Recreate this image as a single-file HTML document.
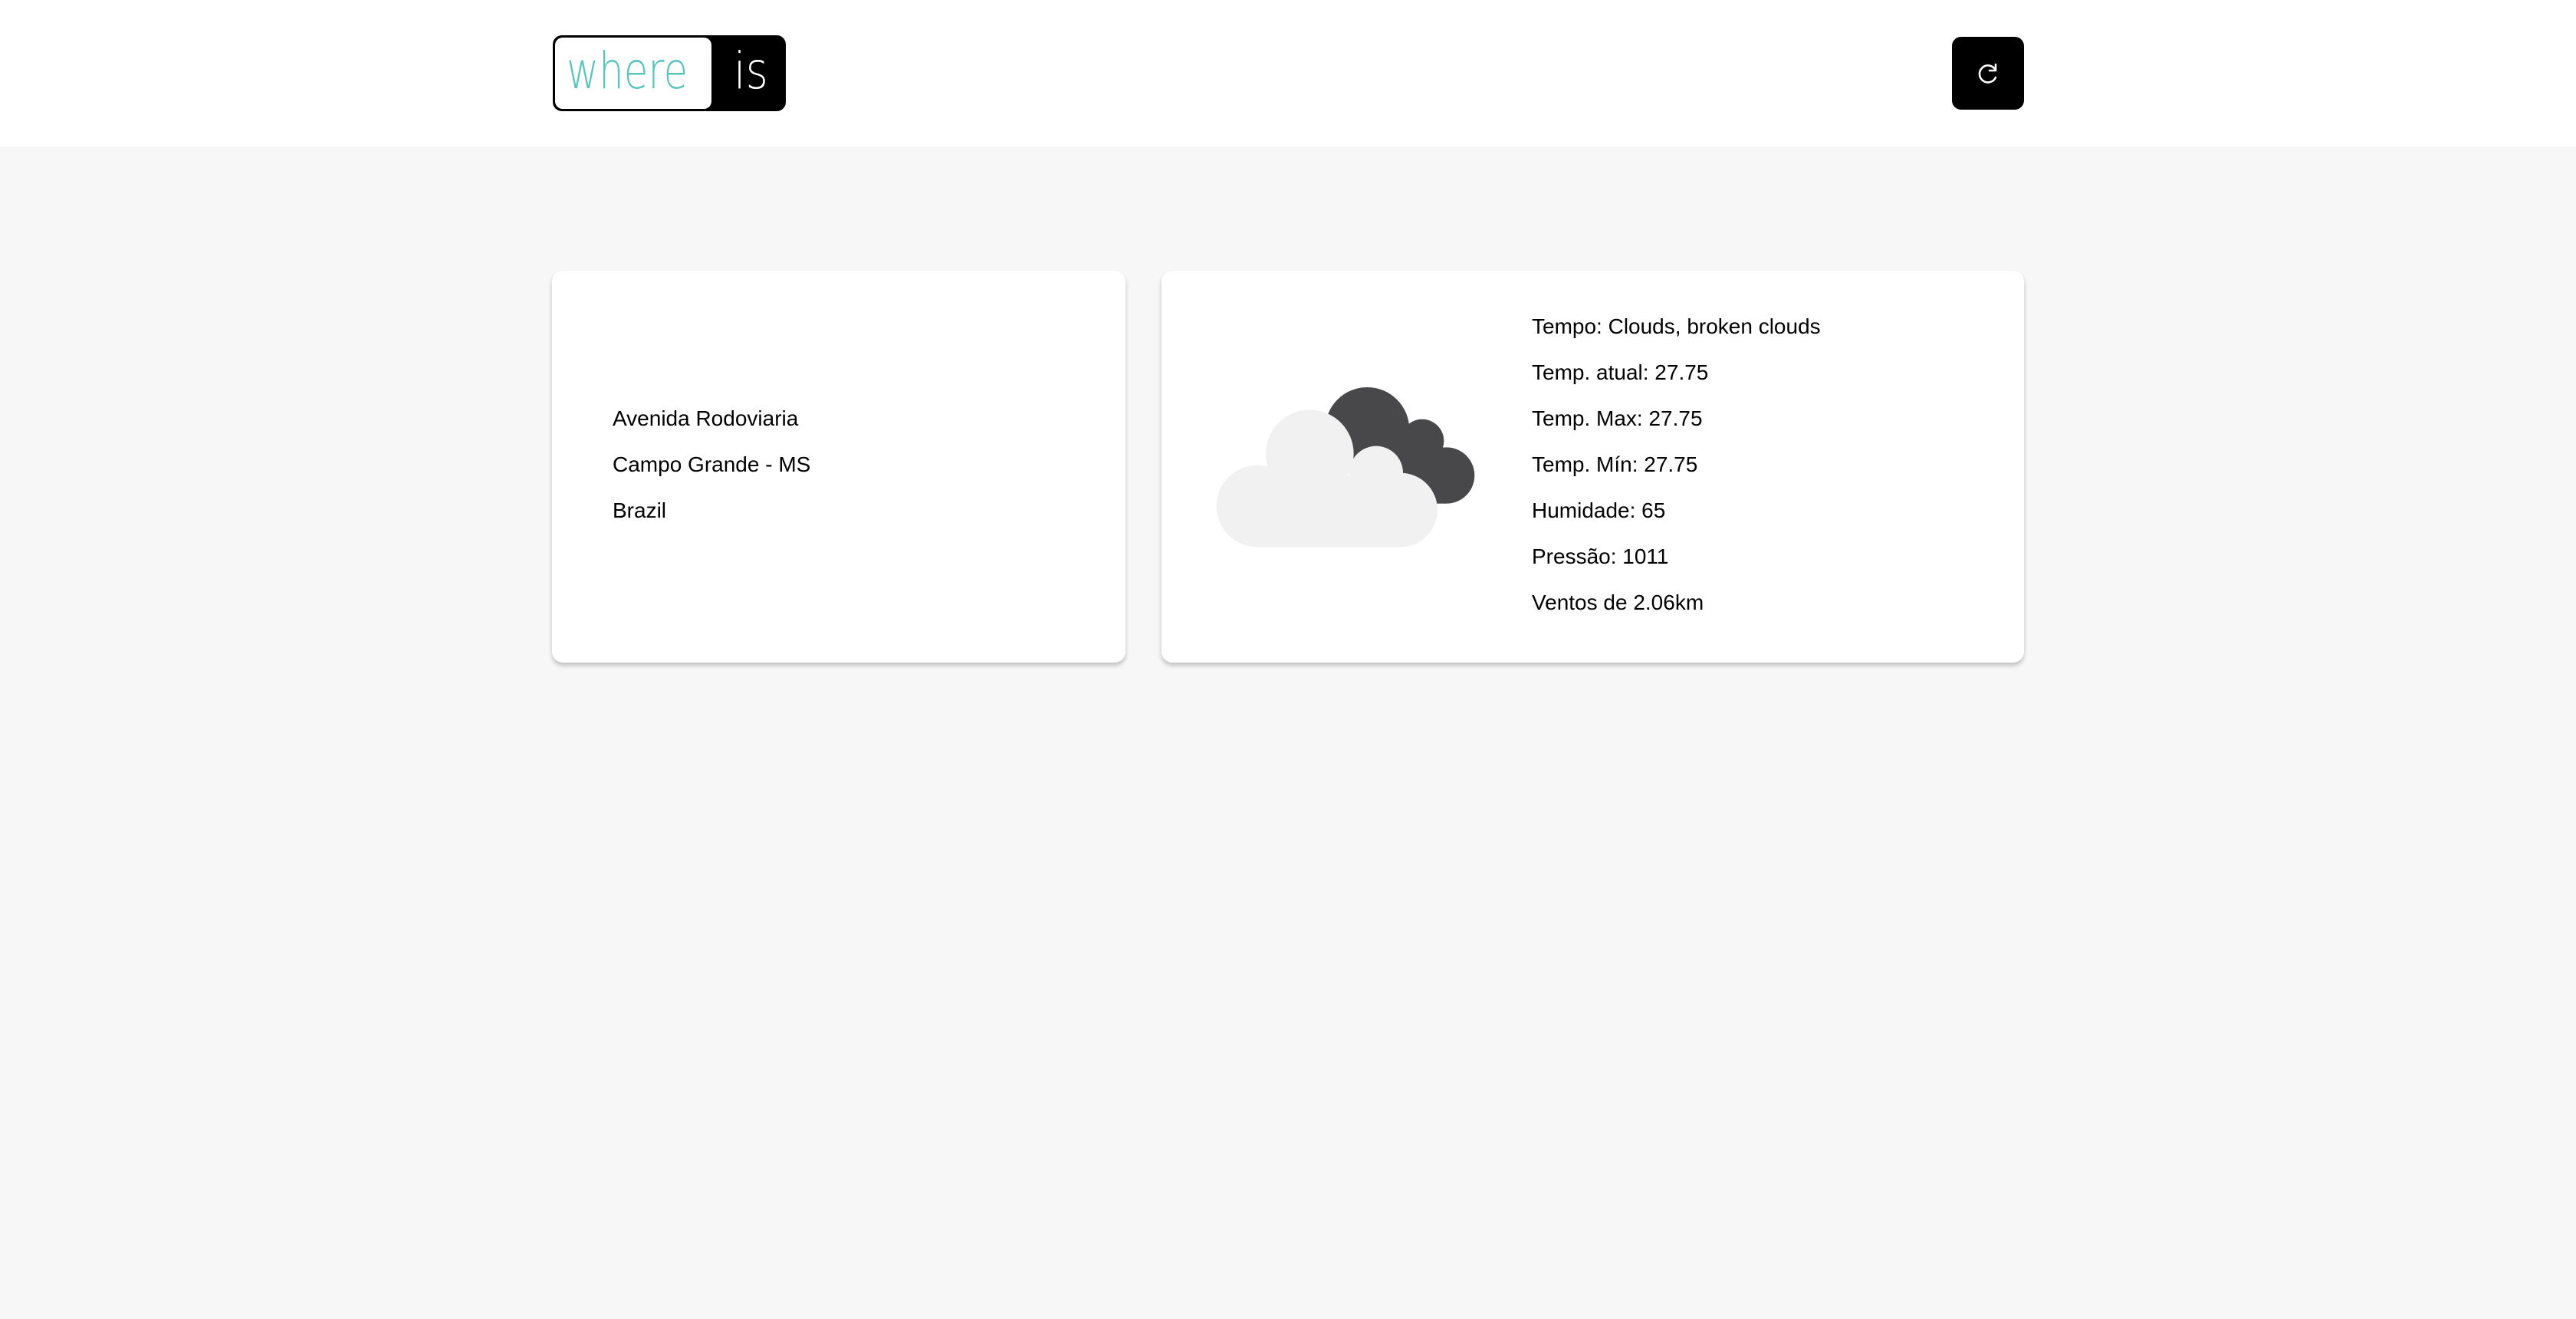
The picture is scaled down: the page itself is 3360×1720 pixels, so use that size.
<!DOCTYPE html>
<html><head><meta charset="utf-8"><style>
*{margin:0;padding:0;box-sizing:border-box}
html,body{width:3360px;height:1720px;background:#f7f7f7;font-family:"Liberation Sans",sans-serif;color:#000;overflow:hidden;position:relative}
.header{position:absolute;left:0;top:0;width:3360px;height:191px;background:#fff}
.logo{position:absolute;left:721px;top:46px;width:304px;height:99px;background:#000;border-radius:12px}
.logo .w{position:absolute;left:3px;top:3px;width:204px;height:93px;background:#fff;border-radius:10px}
.logo .wt{position:absolute;left:18px;top:8px;font-size:66px;color:#5bc4bb;font-family:"DejaVu Sans","Liberation Sans",sans-serif;font-weight:200;transform:scaleX(0.78);transform-origin:left top;white-space:nowrap}
.logo .is{position:absolute;left:236px;top:8px;font-size:66px;color:#fff;font-family:"DejaVu Sans","Liberation Sans",sans-serif;font-weight:200;transform:scaleX(0.85);transform-origin:left top}
.btn{position:absolute;left:2546px;top:48px;width:94px;height:95px;background:#000;border-radius:12px}
.card{position:absolute;top:353px;height:511px;background:#fff;border-radius:14px;box-shadow:0 4px 6px rgba(0,0,0,.22)}
.t{position:absolute;font-size:28px;line-height:32px;white-space:nowrap}
</style></head><body>
<div class="header">
<div class="logo"><div class="w"></div><div class="wt">where</div><div class="is">is</div></div>
<div class="btn"><svg width="94" height="95" viewBox="0 0 94 95"><path d="M56 42 A11 11 0 1 0 57 53" fill="none" stroke="#fff" stroke-width="2.6" stroke-linecap="round"/><path d="M57 36 L57 44 L49 44" fill="none" stroke="#fff" stroke-width="2.6" stroke-linecap="round" stroke-linejoin="round"/></svg></div>
</div>
<div class="card" style="left:720px;width:748px">
<div class="t" style="left:79px;top:177px">Avenida Rodoviaria</div>
<div class="t" style="left:79px;top:237px">Campo Grande - MS</div>
<div class="t" style="left:79px;top:297px">Brazil</div>
</div>
<div class="card" style="left:1515px;width:1125px">
<svg style="position:absolute;left:25px;top:127px" width="420" height="260" viewBox="0 0 1260 780">
<g fill="#48484a"><circle cx="730" cy="240" r="165"/><circle cx="945" cy="285" r="85"/><circle cx="1040" cy="420" r="110"/><rect x="700" y="330" width="340" height="200"/><rect x="800" y="280" width="150" height="100"/></g>
<g fill="#f1f1f1"><circle cx="300" cy="540" r="160"/><circle cx="505" cy="335" r="172"/><circle cx="765" cy="410" r="105"/><circle cx="860" cy="555" r="145"/><rect x="300" y="420" width="560" height="280"/></g>
</svg>
<div class="t" style="left:483px;top:57px">Tempo: Clouds, broken clouds</div>
<div class="t" style="left:483px;top:117px">Temp. atual: 27.75</div>
<div class="t" style="left:483px;top:177px">Temp. Max: 27.75</div>
<div class="t" style="left:483px;top:237px">Temp. Mín: 27.75</div>
<div class="t" style="left:483px;top:297px">Humidade: 65</div>
<div class="t" style="left:483px;top:357px">Pressão: 1011</div>
<div class="t" style="left:483px;top:417px">Ventos de 2.06km</div>
</div>
</body></html>
